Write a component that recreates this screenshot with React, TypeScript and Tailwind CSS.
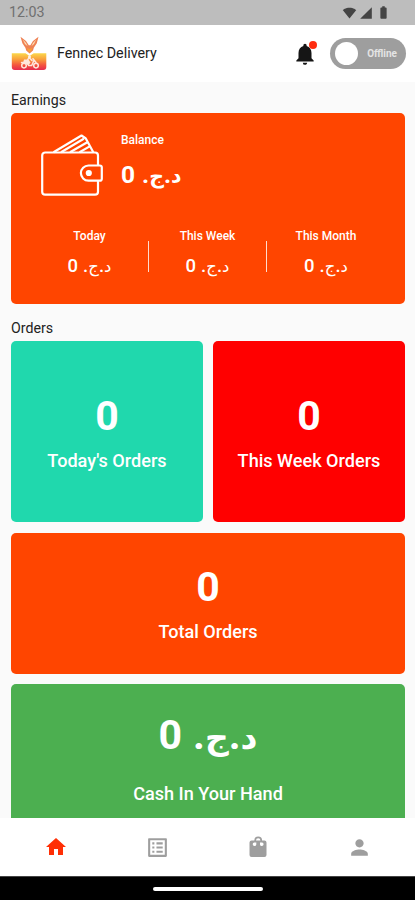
import type { ReactNode } from 'react';
import {
  MdBatteryFull,
  MdHome,
  MdListAlt,
  MdNotifications,
  MdPerson,
  MdSignalCellular4Bar,
  MdSignalWifi4Bar,
} from 'react-icons/md';

const periods = ['Today', 'This Week', 'This Month'];

function Amount({ className, unitClassName, letterClassName }: { className: string; unitClassName: string; letterClassName: string }) {
  return (
    <span dir="rtl" className={`flex items-baseline whitespace-nowrap ${className}`}>
      <span className={unitClassName}>
        <span className={`font-['DejaVu_Sans',sans-serif] ${letterClassName}`}>د</span>.
        <span className={`font-['DejaVu_Sans',sans-serif] ${letterClassName}`}>ج</span>.
      </span>
      <span>0</span>
    </span>
  );
}

function Logo() {
  return (
    <svg viewBox="0 0 36 36" className="h-9 w-9">
      <defs>
        <linearGradient id="sunset" x1="0" y1="0" x2="0" y2="1">
          <stop offset="0" stopColor="#fbd84b" />
          <stop offset="0.35" stopColor="#f9a13c" />
          <stop offset="0.7" stopColor="#f4553f" />
          <stop offset="1" stopColor="#e52a50" />
        </linearGradient>
      </defs>
      {/* fennec head */}
      <path d="M9.5.8 15 5 17.8 9.2h1.6L22 5l5.5-4.2-1.7 6.5-3 4.500-.8 2.6-3.4 3.1-3.4-3.1-.8-2.6-3-4.5z" fill="#ef8254" />
      <path d="m11.8 3.6 3.2 3.5 1.6 3.2-2.6-2.2zM25.2 3.6 22 7.1l-1.6 3.2 2.6-2.2z" fill="#fde1b9" />
      <path d="m16 11.8 2.6 1.4 2.6-1.4-1 3-1.6 1.6-1.6-1.6z" fill="#f6a136" />
      <path d="M.8 17.3h13.7l4.1 2.6 4.1-2.6h12.6V31a3 3 0 0 1-3 3H3.8a3 3 0 0 1-3-3z" fill="url(#sunset)" />
      {/* rider on scooter */}
      <g fill="none" stroke="#ffe6dc" strokeWidth="1.5" strokeLinecap="round">
        <circle cx="13" cy="29.6" r="2.3" />
        <circle cx="25" cy="29.6" r="2.3" />
        <path d="M10.5 26.5h5.2l2 3h3l2.3-5.2M16 25l2-3.5 3 3M22 22.7l3 3.8" />
      </g>
      <circle cx="18.5" cy="20.8" r="1.5" fill="#fff0e6" />
      <path d="M13 23.5h4.5l2 3-1.5 2.2-6-2z" fill="#ffe6dc" />
    </svg>
  );
}

function Wallet() {
  return (
    <svg viewBox="0 0 62 63" className="h-[63px] w-[62px]" fill="none" stroke="white" strokeWidth="2.2" strokeLinejoin="round">
      <path d="M57 31.5V21.5a3 3 0 0 0-3-3H4.2a3 3 0 0 0-3 3v36.2a3 3 0 0 0 3 3H54a3 3 0 0 0 3-3V47" />
      <path d="M58.8 31.5H47.5a7.6 7.6 0 0 0 0 15.2h11.3a2 2 0 0 0 2-2V33.5a2 2 0 0 0-2-2z" />
      <circle cx="47.8" cy="39" r="2" fill="white" />
      <path d="M12.5 18.2 40.5 1.5l4.3 3 7.5 13.7M20 18.2 42.8 4.8M29 18.2l17.3-10M38.5 18.2l10.2-5.8" />
    </svg>
  );
}

function BagIcon() {
  return (
    <svg viewBox="0 0 24 24" className="h-[24px] w-[24px]" fill="currentColor">
      <path
        fillRule="evenodd"
        d="M8.3 5.5a3.9 3.9 0 0 1 7.8 0h2.3A2.1 2.1 0 0 1 20.5 7.6v12.3a2.1 2.1 0 0 1-2.1 2.1H5.6a2.1 2.1 0 0 1-2.1-2.1V7.6A2.1 2.1 0 0 1 5.6 5.5zM10 5.5h4.4a2.2 2.2 0 0 0-4.4 0zM8.3 7.5a1.8 1.8 0 1 0 2 2v-2zM14 7.5v2a1.8 1.8 0 1 0 2-2z"
      />
    </svg>
  );
}

function StatCard({ className, labelClassName, label, children }: { className: string; labelClassName: string; label: string; children: ReactNode }) {
  return (
    <div className={`flex flex-col items-center rounded-[5px] text-white ${className}`}>
      <div className="text-[41px] leading-[48px] font-bold">{children}</div>
      <div className={`text-[18.1px] leading-[22px] font-medium whitespace-nowrap ${labelClassName}`}>{label}</div>
    </div>
  );
}

export default function App() {
  return (
    <div className="flex h-[900px] w-[415px] flex-col overflow-hidden bg-[#fafafa] font-[Roboto,sans-serif] text-[#222]">
      <div className="flex h-[25px] shrink-0 items-center justify-between bg-[#bdbdbd] pr-[24px] pl-[9px] text-[#444]">
        <span className="pt-px text-[14.3px] text-[#707070]">12:03</span>
        <div className="flex items-center">
          <MdSignalWifi4Bar className="h-[14px] w-[15px]" />
          <MdSignalCellular4Bar className="ml-[2px] h-[14px] w-[14px]" />
          <MdBatteryFull className="ml-[3px] h-[15px] w-[15px]" />
        </div>
      </div>

      <header className="flex h-[57px] shrink-0 items-center bg-white pr-[9px] pl-[11px]">
        <Logo />
        <h1 className="ml-[10px] flex-1 text-[14.3px] font-normal">Fennec Delivery</h1>
        <div className="relative mr-[12px]">
          <MdNotifications className="h-[26px] w-[26px] text-[#151515]" />
          <span className="absolute top-0 right-px h-[8px] w-[8px] rounded-full bg-[#ff2d10]" />
        </div>
        <div className="flex h-[31px] w-[76px] items-center justify-between rounded-full bg-[#9e9e9e] pr-[9px] pl-[5px]">
          <span className="h-[23px] w-[23px] rounded-full bg-white" />
          <span className="text-[10px] font-bold text-[#e4e4e4]">Offline</span>
        </div>
      </header>

      <main className="min-h-0 flex-1 overflow-hidden pr-[10px] pl-[11px]">
        <h2 className="mt-[9px] h-[22px] text-[14.2px] leading-[18px]">Earnings</h2>
        <section className="h-[191px] rounded-[5px] bg-[#ff4500] text-white">
          <div className="flex pt-[21px] pl-[30px]">
            <Wallet />
            <div className="ml-[18px]">
              <div className="text-[12px] leading-[12px] font-medium">Balance</div>
              <Amount className="mt-[9px] text-[24.5px] leading-[40px] font-bold" unitClassName="ml-[7px]" letterClassName="text-[20.5px]" />
            </div>
          </div>
          <div className="mt-[33px] flex px-[20px]">
            {periods.map((period, i) => (
              <div key={period} className="flex flex-1 items-start">
                <div className="flex flex-1 flex-col items-center">
                  <div className="text-[12px] leading-[12px] font-medium">{period}</div>
                  <Amount className="mt-[9px] text-[18.5px] leading-[30px] font-medium" unitClassName="ml-[5px]" letterClassName="text-[16.5px]" />
                </div>
                {i < 2 && <div className="mt-[11px] h-[31px] w-px bg-[#ffdccf]" />}
              </div>
            ))}
          </div>
        </section>

        <h2 className="mt-[15px] h-[22px] text-[14.2px] leading-[18px]">Orders</h2>
        <div className="grid grid-cols-2 gap-[10px]">
          <StatCard className="h-[181px] bg-[#20d8ad] pt-[51px]" labelClassName="mt-[10px]" label="Today's Orders">0</StatCard>
          <StatCard className="h-[181px] bg-[#ff0000] pt-[51px]" labelClassName="mt-[10px]" label="This Week Orders">0</StatCard>
          <StatCard className="col-span-2 mt-px h-[141px] bg-[#ff4500] pt-[30px]" labelClassName="mt-[10px]" label="Total Orders">0</StatCard>
          <StatCard className="col-span-2 h-[170px] bg-[#4caf50] pt-[27px]" labelClassName="mt-[21px]" label="Cash In Your Hand">
            <Amount className="" unitClassName="ml-[11px]" letterClassName="text-[33px]" />
          </StatCard>
        </div>
      </main>

      <nav className="grid h-[58px] shrink-0 grid-cols-4 place-items-center bg-white px-[5px] text-[#9e9e9e]">
        <MdHome className="h-[24px] w-[24px] text-[#ff2f05]" />
        <MdListAlt className="ml-px h-[25px] w-[25px]" />
        <BagIcon />
        <MdPerson className="h-[25px] w-[25px]" />
      </nav>
      <div className="flex h-[24px] shrink-0 items-center justify-center border-t border-[#444] bg-black">
        <div className="h-[4px] w-[110px] rounded-full bg-white" />
      </div>
    </div>
  );
}
